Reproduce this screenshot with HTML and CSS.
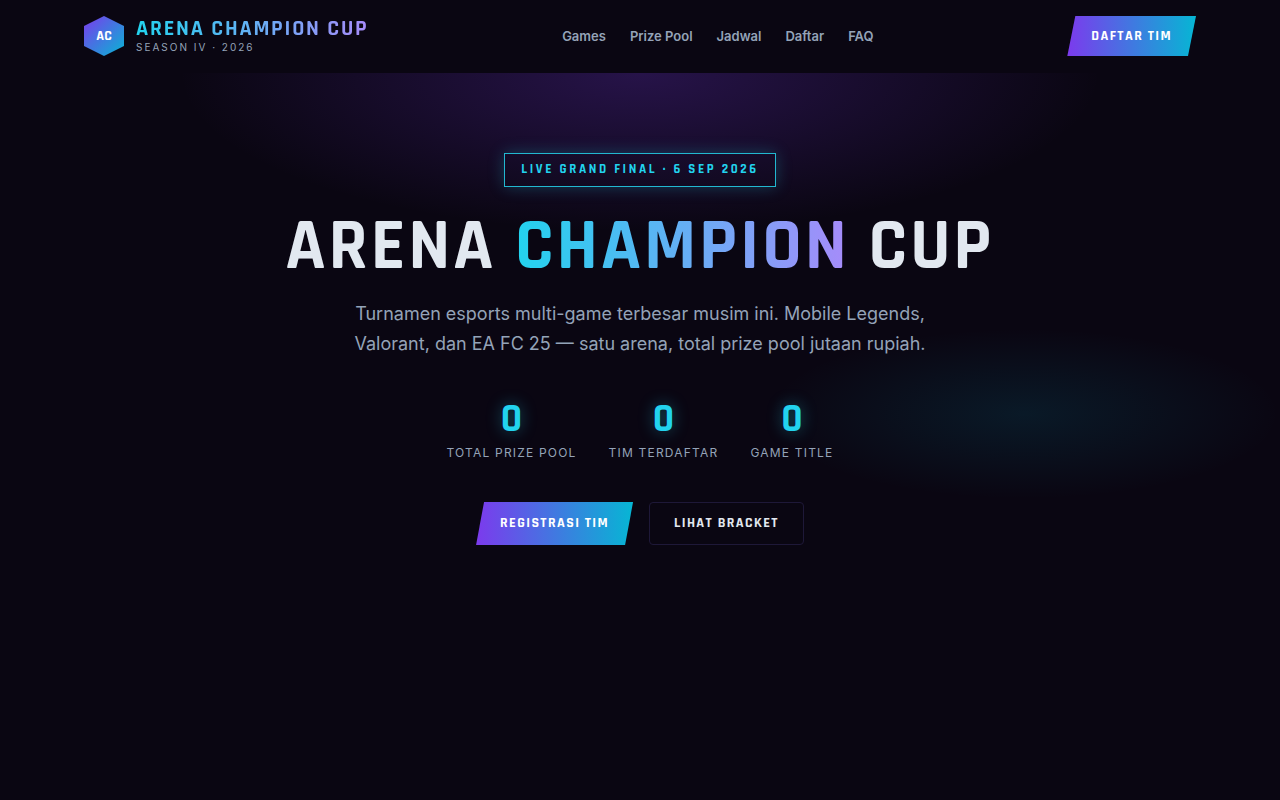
FILE: index.html
```html
<!DOCTYPE html>
<html lang="id">
<head>
    <meta charset="UTF-8">
    <meta name="viewport" content="width=device-width, initial-scale=1.0">
    <title>Arena Champion Cup</title>
    <link rel="stylesheet" href="styles.css">
</head>
<body>

    <header class="site-header">
        <div class="header-inner">
            <a href="#top" class="brand">
                <span class="brand-logo">AC</span>
                <span class="brand-text">
                    <span class="brand-name gradient-text">ARENA CHAMPION CUP</span>
                    <span class="brand-season">SEASON IV · 2026</span>
                </span>
            </a>
            <nav class="nav">
                <a href="#games">Games</a>
                <a href="#prize">Prize Pool</a>
                <a href="#jadwal">Jadwal</a>
                <a href="#daftar">Daftar</a>
                <a href="#faq">FAQ</a>
            </nav>
            <a href="#daftar" class="btn btn-primary btn-small">DAFTAR TIM</a>
        </div>
    </header>

    <main id="top" class="hero">
        <p class="badge">LIVE GRAND FINAL · 6 SEP 2026</p>
        <h1 class="hero-title">ARENA <span class="gradient-text">CHAMPION</span> CUP</h1>
        <p class="hero-desc">Turnamen esports multi-game terbesar musim ini. Mobile Legends, Valorant, dan EA FC 25 — satu arena, total prize pool jutaan rupiah.</p>

        <div class="stats">
            <div class="stat">
                <span class="stat-value">0</span>
                <span class="stat-label">TOTAL PRIZE POOL</span>
            </div>
            <div class="stat">
                <span class="stat-value">0</span>
                <span class="stat-label">TIM TERDAFTAR</span>
            </div>
            <div class="stat">
                <span class="stat-value">0</span>
                <span class="stat-label">GAME TITLE</span>
            </div>
        </div>

        <div class="actions">
            <a href="#daftar" class="btn btn-primary">REGISTRASI TIM</a>
            <a href="#jadwal" class="btn btn-outline">LIHAT BRACKET</a>
        </div>
    </main>

</body>
</html>
```

FILE: styles.css
```css
:root {
    --bg: #0a0612;
    --text: #e2e8f0;
    --muted: #94a3b8;
    --cyan: #22d3ee;
    --display: 'Rajdhani', 'Liberation Sans Narrow', 'Roboto', sans-serif;
}

* {
    box-sizing: border-box;
    margin: 0;
    padding: 0;
}

body {
    min-height: 100vh;
    background-color: var(--bg);
    color: var(--text);
    font-family: 'Inter', sans-serif;
    font-size: 16px;
}

a {
    color: inherit;
    text-decoration: none;
}

.gradient-text {
    background: linear-gradient(90deg, #22d3ee, #a78bfa);
    -webkit-background-clip: text;
    background-clip: text;
    color: transparent;
}

/* Header */
.site-header {
    border-bottom: 1px solid transparent;
}

.header-inner {
    display: flex;
    align-items: center;
    justify-content: space-between;
    max-width: 1160px;
    margin: 0 auto;
    padding: 16px 24px;
}

.brand {
    display: flex;
    align-items: center;
    gap: 12px;
}

.brand-logo {
    display: flex;
    align-items: center;
    justify-content: center;
    width: 40px;
    height: 40px;
    background: linear-gradient(135deg, #7c3aed, #06b6d4);
    clip-path: polygon(50% 0, 100% 25%, 100% 75%, 50% 100%, 0 75%, 0 25%);
    color: #fff;
    font-family: var(--display);
    font-size: 14px;
    font-weight: 700;
}

.brand-text {
    display: flex;
    flex-direction: column;
}

.brand-name {
    font-family: var(--display);
    font-size: 22px;
    font-weight: 700;
    line-height: 22px;
    letter-spacing: 0.08em;
}

.brand-season {
    color: var(--muted);
    font-size: 10px;
    line-height: 14px;
    letter-spacing: 0.2em;
}

.nav {
    display: flex;
    gap: 24px;
    color: var(--muted);
    font-size: 13px;
    font-weight: 600;
    line-height: 20px;
}

.nav a:hover {
    color: var(--cyan);
}

/* Buttons */
.btn {
    padding: 12px 24px;
    font-family: var(--display);
    font-size: 14px;
    font-weight: 700;
    line-height: 19px;
    letter-spacing: 0.1em;
}

.btn-primary {
    background: linear-gradient(90deg, #7c3aed, #06b6d4);
    clip-path: polygon(8px 0, 100% 0, calc(100% - 8px) 100%, 0 100%);
    color: #fff;
}

.btn-small {
    padding: 11px 24px;
    line-height: 18px;
}

.btn-outline {
    padding: 11px 24px;
    border: 1px solid #1e1838;
    border-radius: 4px;
}

/* Hero */
.hero {
    display: flex;
    flex-direction: column;
    align-items: center;
    padding: 80px 24px 96px;
    text-align: center;
    background:
        radial-gradient(ellipse 72% 56% at 50% 0%, rgba(124, 58, 237, 0.25), transparent 50%),
        radial-gradient(ellipse 40% 30% at 80% 60%, rgba(6, 182, 212, 0.11), transparent 50%);
}

.badge {
    padding: 7px 16px 9px;
    border: 1px solid #22b8d0;
    box-shadow: 0 0 16px rgba(34, 211, 238, 0.25);
    color: var(--cyan);
    font-family: var(--display);
    font-size: 13px;
    font-weight: 700;
    line-height: 16px;
    letter-spacing: 0.2em;
}

.hero-title {
    margin-top: 24px;
    font-family: var(--display);
    font-size: 72px;
    font-weight: 700;
    line-height: 72px;
    letter-spacing: 0.04em;
}

.hero-desc {
    max-width: 600px;
    margin-top: 16px;
    color: var(--muted);
    font-size: 18px;
    line-height: 30px;
}

.stats {
    display: flex;
    flex-wrap: wrap;
    justify-content: center;
    gap: 32px;
    margin-top: 40px;
}

.stat {
    display: flex;
    flex-direction: column;
    align-items: center;
}

.stat-value {
    color: var(--cyan);
    font-family: var(--display);
    font-size: 40px;
    font-weight: 700;
    line-height: 42px;
    text-shadow: 0 0 16px rgba(34, 211, 238, 0.4);
}

.stat-label {
    margin-top: 2px;
    color: var(--muted);
    font-size: 12px;
    line-height: 19px;
    letter-spacing: 0.1em;
}

.actions {
    display: flex;
    flex-wrap: wrap;
    justify-content: center;
    gap: 16px;
    margin-top: 40px;
}
```
